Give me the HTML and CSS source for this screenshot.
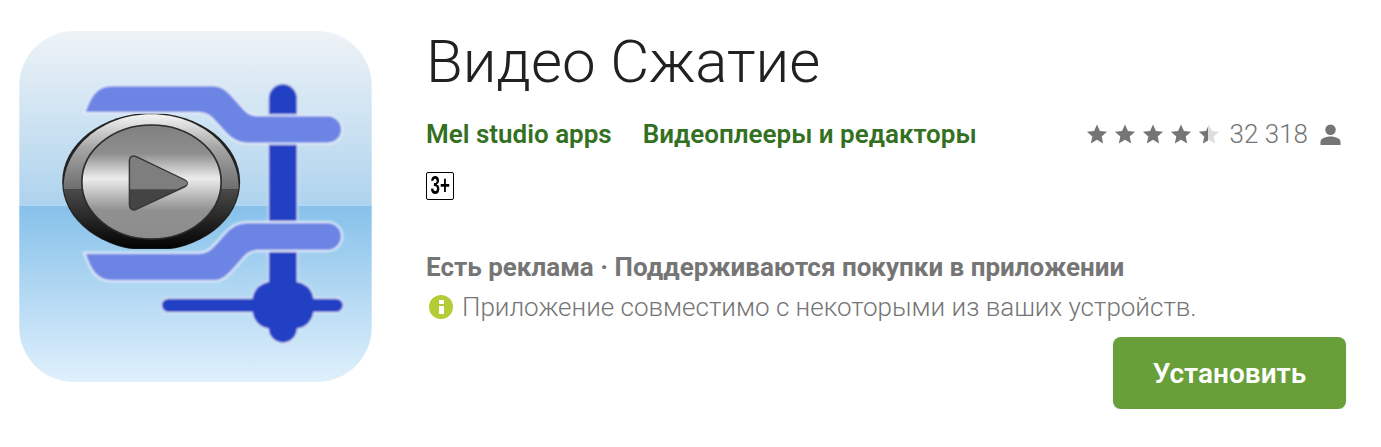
FILE: index.html
```html
<!DOCTYPE html>
<html lang="ru">
<head>
  <meta charset="UTF-8">
  <meta name="viewport" content="width=device-width, initial-scale=1.0">
  <title>Видео Сжатие</title>
  <link rel="stylesheet" href="styles.css">
</head>
<body>
  <svg width="0" height="0" class="defs">
    <defs>
      <symbol id="star" viewBox="0 0 24 24">
        <path d="M12 1.500l3.200 7.200 7.800.8-5.900 5.200 1.700 7.700L12 18.400l-6.800 4 1.700-7.700L1 9.500l7.800-.8z"/>
      </symbol>
    </defs>
  </svg>

  <main class="app">
    <!-- Icono de la app -->
    <svg class="app-icon" viewBox="57 62 1058 1053">
      <defs>
        <linearGradient id="bgTop" x1="0" y1="0" x2="0" y2="1">
          <stop offset="0" stop-color="#eef3f7"/>
          <stop offset="1" stop-color="#aed3ee"/>
        </linearGradient>
        <linearGradient id="bgBottom" x1="0" y1="0" x2="0" y2="1">
          <stop offset="0" stop-color="#86c1ea"/>
          <stop offset="1" stop-color="#e0f0fc"/>
        </linearGradient>
        <linearGradient id="ringTop" x1="0" y1="0" x2="0" y2="1">
          <stop offset="0" stop-color="#f4f6f4"/>
          <stop offset="0.45" stop-color="#a5a5a5"/>
          <stop offset="1" stop-color="#6e6e6e"/>
        </linearGradient>
        <linearGradient id="ringBottom" x1="0" y1="0" x2="0" y2="1">
          <stop offset="0" stop-color="#4a4a4a"/>
          <stop offset="1" stop-color="#000"/>
        </linearGradient>
        <linearGradient id="face" x1="0" y1="0" x2="0" y2="1">
          <stop offset="0" stop-color="#808080"/>
          <stop offset="0.25" stop-color="#8e8e8e"/>
          <stop offset="0.47" stop-color="#ececec"/>
          <stop offset="0.75" stop-color="#909090"/>
          <stop offset="1" stop-color="#8c8c8c"/>
        </linearGradient>
        <clipPath id="iconClip">
          <rect x="57" y="62" width="1058" height="1053" rx="165"/>
        </clipPath>
        <clipPath id="playerClip">
          <rect x="150" y="310" width="600" height="405"/>
        </clipPath>
        <filter id="glow" x="-10%" y="-10%" width="120%" height="120%">
          <feGaussianBlur stdDeviation="2.500"/>
        </filter>
      </defs>
      <g clip-path="url(#iconClip)">
        <rect x="57" y="62" width="1058" height="524" fill="url(#bgTop)"/>
        <rect x="57" y="586" width="1058" height="529" fill="url(#bgBottom)"/>
      </g>

      <g filter="url(#glow)">
        <!-- Prensa -->
        <path class="post post-glow" d="M848 264V955"/>
        <path class="rod rod-glow" d="M505 885H1008"/>
        <rect class="hub-glow" x="757" y="815" width="183" height="140" rx="55"/>
        <path class="post" d="M848 264V955"/>
        <path class="rod" d="M505 885H1008"/>
        <rect class="hub" x="757" y="815" width="183" height="140" rx="55"/>
        <path class="jaw" d="M252 308C266 268 282 225 335 225H640C665 225 680 238 700 260L725 288C740 306 750 315 775 315H982C1008 315 1026 335 1026 358S1008 400 982 400H740C715 400 695 390 675 368L650 340C630 318 620 308 595 308Z"/>
        <path class="jaw" d="M252 727C266 767 282 813 335 813H640C665 813 680 800 700 778L725 750C740 732 750 722 775 722H982C1008 722 1026 700 1026 678S1008 635 982 635H740C715 635 695 645 675 667L650 695C630 717 620 727 595 727Z"/>
      </g>

      <!-- Boton de play -->
      <g clip-path="url(#playerClip)">
        <ellipse cx="453" cy="515" rx="267" ry="207" fill="#222"/>
        <path d="M191 537C185 420 300 312 453 312S721 420 715 537Z" fill="url(#ringTop)"/>
        <path d="M191 537H715C700 640 590 720 453 720S206 640 191 537Z" fill="url(#ringBottom)"/>
        <ellipse cx="454" cy="515" rx="209" ry="171" fill="url(#face)" stroke="#2c2c2c" stroke-width="5"/>
        <path d="M388 537V452C388 438 398 434 410 440L552 508C564 514 564 524 552 530L410 596C398 602 388 596 388 584Z" fill="#444" stroke="#3a3a3a" stroke-width="5"/>
        <path d="M390 537V452C390 440 398 436 410 442L552 510C562 515 562 520 558 524L530 537Z" fill="#7e7e7e"/>
      </g>
    </svg>

    <section class="info">
      <h1 class="title">Видео Сжатие</h1>

      <div class="meta">
        <a href="#" class="link">Mel studio apps</a>
        <a href="#" class="link link-genre">Видеоплееры и редакторы</a>
        <div class="rating">
          <svg class="star"><use href="#star"/></svg>
          <svg class="star"><use href="#star"/></svg>
          <svg class="star"><use href="#star"/></svg>
          <svg class="star"><use href="#star"/></svg>
          <span class="star-half">
            <svg class="star star-empty"><use href="#star"/></svg>
            <span class="star-fill"><svg class="star"><use href="#star"/></svg></span>
          </span>
          <span class="count">32 318</span>
          <svg class="person" viewBox="1 1 22 22">
            <circle cx="12" cy="7" r="5.500"/>
            <path d="M1.500 23v-3.500C1.500 15.500 8 14 12 14s10.500 1.500 10.500 5.500V23z"/>
          </svg>
        </div>
      </div>

      <div class="age"><span class="age-text">3+</span></div>

      <p class="ads">Есть реклама · Поддерживаются покупки в приложении</p>

      <p class="compat">
        <span class="compat-icon"><span class="dot"></span><span class="bar"></span></span>
        Приложение совместимо с некоторыми из ваших устройств.
      </p>

      <div class="actions">
        <button type="button" class="install">Установить</button>
      </div>
    </section>
  </main>
</body>
</html>
```

FILE: styles.css
```css
body {
  margin: 0;
  font-family: 'Roboto', sans-serif;
  background: #fff;
  color: #757575;
  overflow: hidden;
}

.defs {
  display: block;
  height: 0;
}

.app {
  display: flex;
  align-items: flex-start;
  gap: 54px;
  padding: 31px 35px 0 19px;
}

.app-icon {
  flex: none;
  width: 353px;
  height: 351px;
}

.post,
.rod {
  fill: none;
  stroke: #2040c4;
  stroke-linecap: round;
}

.post {
  stroke-width: 84px;
}

.rod {
  stroke-width: 40px;
}

.post-glow,
.rod-glow {
  stroke: #e4edf9;
}

.post-glow {
  stroke-width: 92px;
}

.rod-glow {
  stroke-width: 48px;
}

.hub {
  fill: #2040c4;
}

.hub-glow {
  fill: #2040c4;
  stroke: #e4edf9;
  stroke-width: 8px;
}

.jaw {
  fill: #6c85e5;
  stroke: #e6eefa;
  stroke-width: 6px;
}

.info {
  flex: 1;
  min-width: 0;
}

.title {
  margin: 0;
  font-size: 60px;
  font-weight: 300;
  line-height: 62px;
  color: #212121;
}

.meta {
  display: flex;
  align-items: center;
  margin-top: 26px;
  height: 30px;
}

.link {
  font-size: 26px;
  font-weight: 600;
  color: #33701f;
  text-decoration: none;
}

.link-genre {
  margin-left: 31px;
}

.rating {
  display: flex;
  align-items: center;
  gap: 6px;
  margin-left: auto;
  margin-right: 5px;
}

.star {
  display: block;
  width: 22px;
  height: 22px;
  fill: #757575;
}

.star-half {
  position: relative;
  width: 22px;
  height: 22px;
}

.star-empty {
  fill: #dedede;
}

.star-fill {
  position: absolute;
  top: 0;
  left: 0;
  width: 10px;
  height: 22px;
  overflow: hidden;
}

.count {
  margin-left: 4px;
  font-size: 26px;
  font-weight: 300;
  line-height: 30px;
}

.person {
  width: 21px;
  height: 21px;
  margin-left: 6px;
  fill: #757575;
}

.age {
  display: flex;
  justify-content: center;
  box-sizing: border-box;
  width: 28px;
  height: 28px;
  margin-top: 23px;
  border: 1.500px solid #000;
  border-radius: 2px;
  background: #fff;
  color: #000;
  font-family: 'Liberation Sans', sans-serif;
  font-size: 25px;
  font-weight: 700;
  line-height: 25px;
}

.age-text {
  display: block;
  transform: scaleX(0.68);
}

.ads {
  margin: 52px 0 0;
  font-size: 26px;
  font-weight: 700;
  line-height: 30px;
}

.compat {
  display: flex;
  align-items: center;
  gap: 9px;
  margin: 10px 0 0;
  padding-left: 3px;
  font-size: 26px;
  font-weight: 300;
  line-height: 30px;
}

.compat-icon {
  display: flex;
  flex-direction: column;
  align-items: center;
  justify-content: center;
  gap: 2px;
  width: 24px;
  height: 24px;
  border-radius: 50%;
  background: #b4cc35;
}

.dot {
  width: 5px;
  height: 4px;
  background: #fff;
}

.bar {
  width: 5px;
  height: 8px;
  background: #fff;
}

.actions {
  display: flex;
  justify-content: flex-end;
  margin-top: 15px;
}

.install {
  width: 233px;
  height: 72px;
  padding: 0;
  border: none;
  border-radius: 8px;
  background: #689f38;
  color: #fff;
  font-family: inherit;
  font-size: 28px;
  font-weight: 600;
  box-shadow: 0 1px 2px rgba(0, 0, 0, 0.12);
  cursor: pointer;
}
```
